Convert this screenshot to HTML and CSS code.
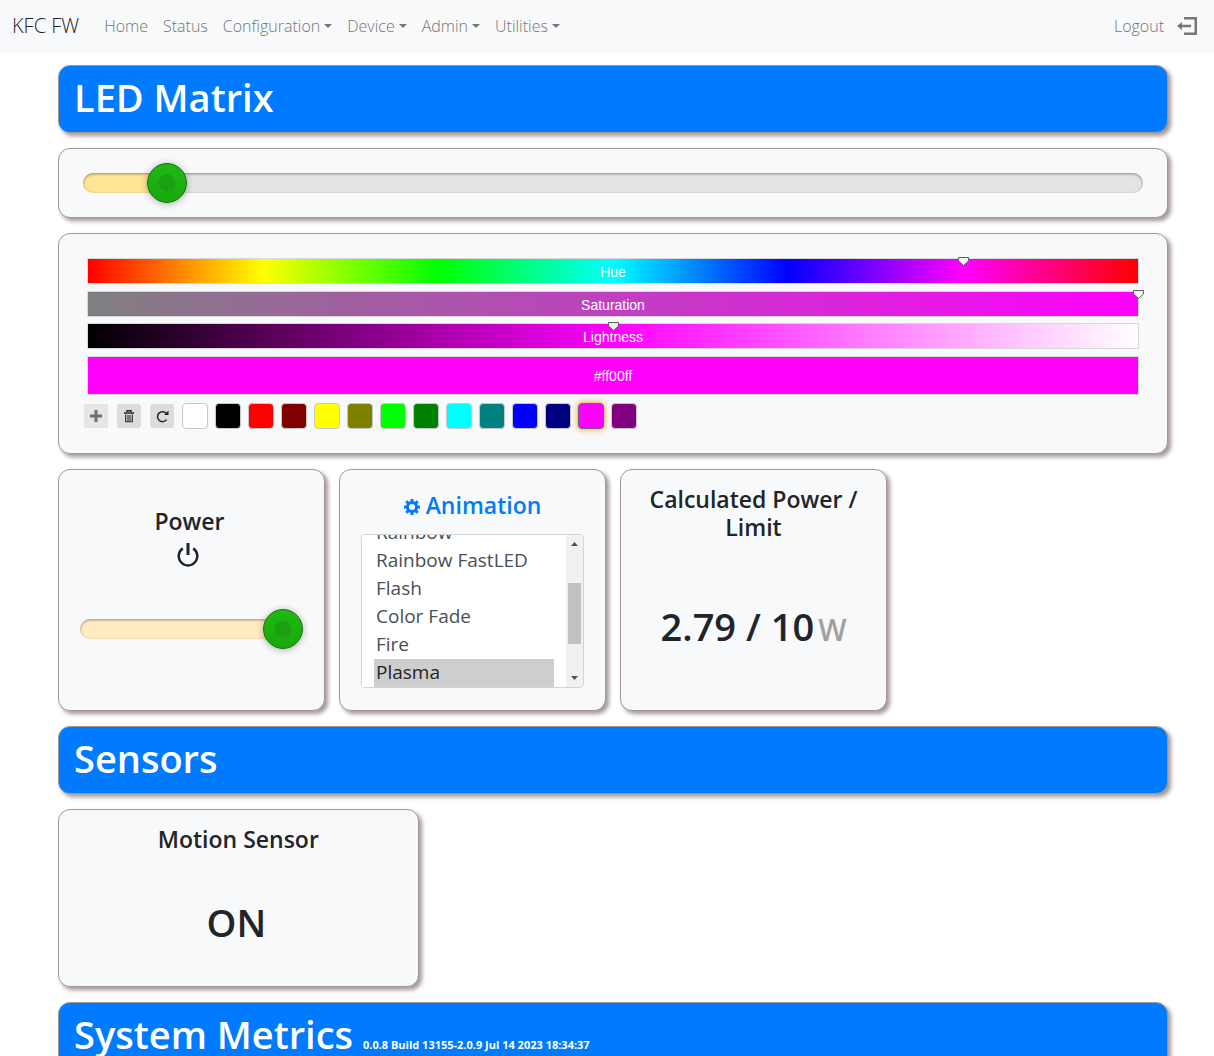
FILE: index.html
```html
<!DOCTYPE html>
<html lang="en">
<head>
<meta charset="utf-8">
<meta name="viewport" content="width=device-width, initial-scale=1">
<title>KFC FW</title>
<link rel="stylesheet" href="styles.css">
<script src="app.js" defer></script>
</head>
<body>
<nav class="navbar">
  <a class="brand" href="#">KFC FW</a>
  <ul class="nav-list">
    <li><a href="#">Home</a></li>
    <li><a href="#">Status</a></li>
    <li><a class="dropdown" href="#">Configuration</a></li>
    <li><a class="dropdown" href="#">Device</a></li>
    <li><a class="dropdown" href="#">Admin</a></li>
    <li><a class="dropdown" href="#">Utilities</a></li>
  </ul>
  <a class="logout" href="#">Logout
    <svg width="20" height="18" viewBox="0 0 20 18" aria-hidden="true"><path d="M7 0h13v18H7v-2.500h10.500v-13H7z M0 9l5-4v2.800h9v2.400H5V13z" fill="currentColor"/></svg>
  </a>
</nav>

<main class="dashboard">
  <header class="card banner"><h1>LED Matrix</h1></header>

  <section class="card brightness">
    <input class="slider" type="range" min="0" max="255" value="16" aria-label="Brightness" style="--fill: 8%">
  </section>

  <section class="card picker">
    <div class="channel hue">
      <label for="hue">Hue</label>
      <input id="hue" type="range" min="0" max="360" value="300">
    </div>
    <div class="channel saturation">
      <label for="saturation">Saturation</label>
      <input id="saturation" type="range" min="0" max="100" value="100">
    </div>
    <div class="channel lightness">
      <label for="lightness">Lightness</label>
      <input id="lightness" type="range" min="0" max="100" value="50">
    </div>
    <output class="channel preview">#ff00ff</output>
    <div class="swatches">
      <button class="tool" type="button" aria-label="Add" disabled><svg width="12" height="12" viewBox="0 0 12 12"><path d="M4.500 0h3v4.500H12v3H7.500V12h-3V7.500H0v-3h4.500z" fill="#6c6e70"/></svg></button>
      <button class="tool" type="button" aria-label="Delete"><svg width="12" height="13" viewBox="0 0 12 13"><path d="M1 3h10M4 2V.700h4V2" fill="none" stroke="#212529" stroke-width="1.400"/><path d="M2.700 4.500v7.300h6.600V4.500M5 5v6M7 5v6" fill="none" stroke="#212529" stroke-width="1.100"/></svg></button>
      <button class="tool" type="button" aria-label="Reset"><svg width="13" height="13" viewBox="0 0 13 13"><path d="M10.600 9.600A5 5 0 1 1 10.300 3.300" fill="none" stroke="#212529" stroke-width="1.500"/><path d="M12.500 .500v4.500H8z" fill="#212529"/></svg></button>
      <button class="swatch" type="button" aria-label="White" style="background: #ffffff"></button>
      <button class="swatch" type="button" aria-label="Black" style="background: #000000"></button>
      <button class="swatch" type="button" aria-label="Red" style="background: #ff0000"></button>
      <button class="swatch" type="button" aria-label="Maroon" style="background: #800000"></button>
      <button class="swatch" type="button" aria-label="Yellow" style="background: #ffff00"></button>
      <button class="swatch" type="button" aria-label="Olive" style="background: #808000"></button>
      <button class="swatch" type="button" aria-label="Lime" style="background: #00ff00"></button>
      <button class="swatch" type="button" aria-label="Green" style="background: #008000"></button>
      <button class="swatch" type="button" aria-label="Aqua" style="background: #00ffff"></button>
      <button class="swatch" type="button" aria-label="Teal" style="background: #008080"></button>
      <button class="swatch" type="button" aria-label="Blue" style="background: #0000ff"></button>
      <button class="swatch" type="button" aria-label="Navy" style="background: #000080"></button>
      <button class="swatch active" type="button" aria-label="Fuchsia" style="background: #ff00ff"></button>
      <button class="swatch" type="button" aria-label="Purple" style="background: #800080"></button>
    </div>
  </section>

  <div class="row quarters">
    <section class="card power">
      <h2>Power</h2>
      <svg class="power-icon" width="22" height="24" viewBox="0 0 22 24" aria-hidden="true"><path d="M11 0v12" stroke="currentColor" stroke-width="3" fill="none"/><path d="M5.800 5.400A9.300 9.300 0 1 0 16.200 5.400" stroke="currentColor" stroke-width="2.500" fill="none"/></svg>
      <input class="slider on-off" type="range" min="0" max="1" value="1" aria-label="Power" style="--fill: 100%">
    </section>
    <section class="card animation">
      <h2><a href="#"><svg width="16" height="16" viewBox="0 0 16 16" aria-hidden="true"><g fill="none" stroke="currentColor"><circle cx="8" cy="8" r="4.600" stroke-width="3"/><path d="M8 0v3M8 13v3M0 8h3M13 8h3M2.300 2.300l2.200 2.200M11.500 11.500l2.200 2.200M2.300 13.700l2.200-2.200M11.500 4.500l2.200-2.200" stroke-width="3"/></g></svg> Animation</a></h2>
      <div class="listbox">
        <select size="5" aria-label="Animation">
          <option>Solid</option>
          <option>Gradient</option>
          <option>Rainbow</option>
          <option>Rainbow FastLED</option>
          <option>Flash</option>
          <option>Color Fade</option>
          <option>Fire</option>
          <option selected>Plasma</option>
          <option>Interleaved</option>
          <option>Visualizer</option>
        </select>
        <div class="scrollbar" aria-hidden="true">
          <svg width="7" height="4" viewBox="0 0 7 4"><path d="M0 4l3.500-4L7 4z" fill="#505050"/></svg>
          <div class="track"><div class="thumb"></div></div>
          <svg width="7" height="4" viewBox="0 0 7 4"><path d="M0 0h7L3.500 4z" fill="#505050"/></svg>
        </div>
      </div>
    </section>
    <section class="card reading">
      <h2>Calculated Power / Limit</h2>
      <p class="value">2.79 / 10<span class="unit">W</span></p>
    </section>
  </div>

  <header class="card banner"><h1>Sensors</h1></header>

  <div class="row thirds">
    <section class="card reading">
      <h2>Motion Sensor</h2>
      <p class="value state">ON</p>
    </section>
  </div>

  <header class="card banner"><h1>System Metrics <small>0.0.8 Build 13155-2.0.9 Jul 14 2023 18:34:37</small></h1></header>
</main>
</body>
</html>
```
FILE: app.js
```js
// Bring the selected animation to the bottom edge of the list.
const list = document.querySelector(".listbox select");
const revealSelected = () => {
  const option = list.selectedOptions[0].getBoundingClientRect();
  list.scrollTop += option.bottom - list.getBoundingClientRect().bottom;
};
window.addEventListener("load", () => requestAnimationFrame(revealSelected));
```
FILE: styles.css
```css
*, *::before, *::after { box-sizing: border-box; }

body {
  margin: 0;
  background: #fff;
  color: #212529;
  font-family: "Segoe UI", "Open Sans", "Noto Sans", sans-serif;
  font-size: 16px;
  font-weight: 300;
  line-height: 24px;
}

h1, h2, p { margin: 0; }
a { color: inherit; text-decoration: none; }
button { font: inherit; padding: 0; }

/* Navigation */
.navbar {
  display: flex;
  align-items: center;
  min-height: 53px;
  padding: 0 17px 2px 12px;
  background: #f8f9fa;
  color: #757677;
}
.brand { margin-right: 25px; color: #212529; font-size: 20px; }
.nav-list { display: flex; gap: 15px; margin: 0; padding: 0; list-style: none; }
.dropdown::after {
  content: "";
  display: inline-block;
  margin-left: 4px;
  vertical-align: 4px;
  border: 4px solid transparent;
  border-top-color: currentColor;
  border-bottom: 0;
}
.logout { display: flex; align-items: center; gap: 13px; margin-left: auto; }

/* Cards */
.dashboard {
  display: flex;
  flex-direction: column;
  gap: 15px;
  padding: 12px 46px 15px 58px;
}
.card {
  background: #f8f9fa;
  border: 1px solid #a39797;
  border-radius: 12px;
  box-shadow: 3px 3px 4px #a39797;
}
.row { display: grid; gap: 14px; }
.quarters { grid-template-columns: repeat(4, 1fr); }
.thirds { grid-template-columns: repeat(3, 1fr); }

.banner { padding: 7px 15px 11px; background: #007bff; color: #fff; }
.banner h1 { font-size: 38px; font-weight: 600; line-height: 48px; }
.banner small { font-size: 11px; font-weight: 700; }

h2 { font-size: 23px; font-weight: 600; line-height: 28px; text-align: center; }

/* Large sliders */
.slider {
  display: block;
  width: 100%;
  height: 20px;
  margin: 0;
  appearance: none;
  background: none;
}
.slider::-webkit-slider-runnable-track {
  height: 20px;
  border-radius: 10px;
  background: linear-gradient(to right, #ffe594 var(--fill), #e5e5e5 var(--fill));
  box-shadow: inset 0 1px 3px rgba(0, 0, 0, .4);
}
.slider::-webkit-slider-thumb {
  appearance: none;
  width: 40px;
  height: 40px;
  margin-top: -10px;
  border: 1px solid #176d10;
  border-radius: 50%;
  background:
    radial-gradient(circle, #1ca012 8px, transparent 9px),
    linear-gradient(#1fb812, #19a90d);
  box-shadow: 0 1px 7px rgba(0, 0, 0, .3);
}
.slider.on-off::-webkit-slider-runnable-track { background: #ffecc2; }
.brightness { padding: 24px; }

/* Colour picker */
.picker { padding: 24px 28px; font-family: "Liberation Sans", Arial, sans-serif; font-weight: 400; }
.channel {
  position: relative;
  display: flex;
  align-items: center;
  justify-content: center;
  height: 26px;
  margin-bottom: 7px;
  border: 1px solid #d8d8d8;
  color: #fff;
  font-size: 14px;
}
.channel label { padding-top: 2px; }
.channel input {
  position: absolute;
  inset: -2px -6px auto;
  width: auto;
  height: 9px;
  margin: 0;
  appearance: none;
  background: none;
}
.channel input::-webkit-slider-runnable-track { height: 9px; }
.channel input::-webkit-slider-thumb {
  appearance: none;
  width: 11px;
  height: 9px;
  background: url("data:image/svg+xml,%3Csvg xmlns='http://www.w3.org/2000/svg' width='11' height='9'%3E%3Cpath d='M.5.5h10v3.500l-5 4.500-5-4.500z' fill='%23f2f2f2' stroke='%23606060'/%3E%3C/svg%3E");
}
.hue { background: linear-gradient(to right, #f00, #ff0, #0f0, #0ff, #00f, #f0f, #f00); }
.saturation { margin-bottom: 6px; background: linear-gradient(to right, #808080, #f0f); }
.lightness { background: linear-gradient(to right, #000, #f0f, #fff); }
.preview { height: 39px; margin-bottom: 8px; background: #f0f; }

.swatches { display: flex; flex-wrap: wrap; gap: 7px; margin-left: -4px; }
.swatch, .tool { width: 26px; height: 26px; border-radius: 4px; }
.swatch { border: 1px solid #c8c8c8; }
.swatch.active { border-color: #666; box-shadow: 0 0 6px #ff8a1c; }
.tool {
  display: flex;
  align-items: center;
  justify-content: center;
  border: 1px solid transparent;
  background: #dcdcdc padding-box;
}
.tool:disabled { background-color: #e6e6e6; }

/* Tiles */
.power, .animation { display: flex; flex-direction: column; min-height: 242px; padding: 21px; }
.power { align-items: center; padding-top: 37px; }
.power h2 { padding-right: 4px; }
.power-icon { margin: 8px 8px 52px 0; }

.animation h2 { color: #007bff; margin-bottom: 15px; }
.animation h2 svg { vertical-align: -1px; }
.listbox {
  display: flex;
  height: 154px;
  overflow: hidden;
  border: 1px solid #ced4da;
  border-radius: 4px;
  background: #fff;
}
.listbox select {
  flex: 1;
  min-width: 0;
  height: 152px;
  padding: 6px 12px;
  border: 0;
  outline: 0;
  background: #fff;
  color: #495057;
  font-family: inherit;
  font-size: 19px;
  font-weight: 300;
  scrollbar-width: none;
}
.listbox option { height: 28px; padding: 0 2px; line-height: 28px; }
.listbox option:checked { background: #cecece linear-gradient(#cecece, #cecece); color: #212529; }
.scrollbar {
  display: flex;
  flex-direction: column;
  align-items: center;
  width: 17px;
  padding: 7px 0;
  background: #f1f1f1;
}
.track { flex: 1; width: 13px; padding: 37px 0 16px; }
.thumb { height: 61px; background: #c1c1c1; }

.reading { display: flex; flex-direction: column; min-height: 178px; padding: 15px 21px; }
.value {
  margin: auto;
  padding-top: 20px;
  font-size: 38px;
  font-weight: 600;
  line-height: 48px;
}
.unit { margin-left: 4px; color: #a0a0a0; font-size: 30px; }
.state { padding-right: 4px; }
```
